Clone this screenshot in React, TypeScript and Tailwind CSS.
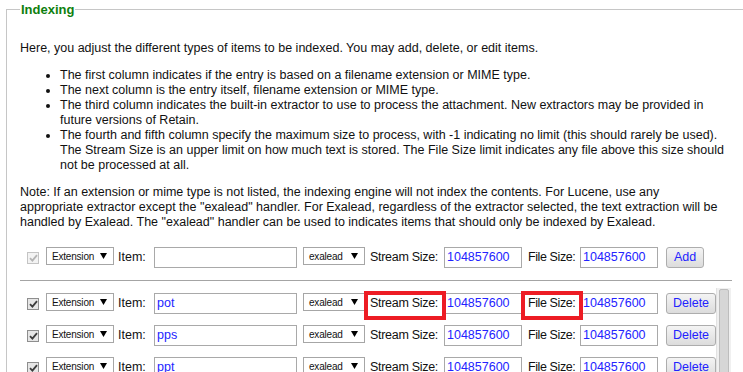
import { FC } from 'react';

const font = { fontFamily: '"Liberation Sans", Arial, sans-serif' };

const Check: FC<{ disabled?: boolean }> = ({ disabled }) => (
  <div
    className={`mt-[5px] ml-[7px] flex h-[12px] w-[12px] shrink-0 items-center justify-center border ${
      disabled ? 'border-[#c4c4c4] bg-[#f3f3f3]' : 'border-[#8e8e8e] bg-[#e6e6e6]'
    }`}
  >
    <svg width="9" height="8" viewBox="0 0 9 8">
      <path
        d="M1 4.2 L3.4 6.6 L8 1.2"
        fill="none"
        stroke={disabled ? '#b4b4b4' : '#3c3c3c'}
        strokeWidth="1.8"
      />
    </svg>
  </div>
);

const Select: FC<{ value: string; className: string }> = ({ value, className }) => (
  <div
    className={`flex h-[18px] shrink-0 items-center justify-between border border-[#a6a6a6] bg-white pr-[6px] pl-[5px] text-[10px] tracking-[-0.2px] text-[#111] ${className}`}
  >
    <span>{value}</span>
    <svg width="7" height="6" viewBox="0 0 7 6">
      <path d="M0 0 H7 L3.5 6 Z" fill="#000" />
    </svg>
  </div>
);

const Field: FC<{ value: string; className: string }> = ({ value, className }) => (
  <div
    className={`flex h-[21px] shrink-0 items-center border border-[#a9a9a9] bg-white pl-[2px] text-[12.5px] text-[#2323ff] ${className}`}
  >
    {value}
  </div>
);

const Label: FC<{ text: string; className: string; marked?: boolean; box?: string }> = ({
  text,
  className,
  marked,
  box,
}) => (
  <div className={`relative flex h-[21px] shrink-0 items-center whitespace-nowrap ${className}`}>
    {text}
    {marked && <div className={`absolute z-10 border-[4px] border-[#ed1c24] ${box}`} />}
  </div>
);

const Row: FC<{ item: string; template?: boolean; marked?: boolean }> = ({ item, template, marked }) => (
  <div className="flex items-start text-[12.5px] text-[#111]">
    <Check disabled={template} />
    <Select value="Extension" className="ml-[7px] w-[68px]" />
    <Label text="Item:" className="ml-[4px] w-[29px]" />
    <Field value={item} className="ml-[7px] w-[143px]" />
    <Select value="exalead" className="ml-[6px] w-[62px]" />
    <Label
      text="Stream Size:"
      className="ml-[5px] w-[68px] tracking-[-0.3px]"
      marked={marked}
      box="top-[-2px] bottom-[-6px] left-[-6px] right-[-8px]"
    />
    <Field value="104857600" className="ml-[6px] w-[78px]" />
    <Label
      text="File Size:"
      className="ml-[6px] w-[46px] tracking-[-0.4px]"
      marked={marked}
      box="top-[-2px] bottom-[-6px] left-[-7px] right-[-9px]"
    />
    <Field value="104857600" className="ml-[6px] w-[78px]" />
    <button
      className={`ml-[8px] h-[21px] shrink-0 rounded-[3px] border border-[#adadad] bg-gradient-to-b from-[#f4f4f4] to-[#dcdcdc] text-[12.5px] text-[#2323ff] ${
        template ? 'w-[38px]' : 'w-[50px]'
      }`}
    >
      {template ? 'Add' : 'Delete'}
    </button>
  </div>
);

const items = ['pot', 'pps', 'ppt', 'pptx', 'ppsx', 'potx'];

export default function App() {
  return (
    <div className="h-[372px] w-[743px] overflow-hidden bg-white text-[12.5px] leading-[15px] text-[#111]" style={font}>
      <fieldset className="ml-[6px] border border-r-0 border-b-0 border-[#c6c6c6] pl-[13px]">
        <legend className="px-[1px] text-[13px] leading-[19px] font-bold text-[#0e7f0e]">Indexing</legend>
        <p className="mt-[22px]">
          Here, you adjust the different types of items to be indexed. You may add, delete, or edit items.
        </p>
        <ul className="mt-[12px] w-[723px] list-disc pl-[40px]">
          <li>The first column indicates if the entry is based on a filename extension or MIME type.</li>
          <li>The next column is the entry itself, filename extension or MIME type.</li>
          <li>
            The third column indicates the built-in extractor to use to process the attachment. New extractors may be
            provided in
            <br />
            future versions of Retain.
          </li>
          <li>
            The fourth and fifth column specify the maximum size to process, with -1 indicating no limit (this should
            rarely be used).
            <br />
            The Stream Size is an upper limit on how much text is stored. The File Size limit indicates any file above
            this size should
            <br />
            not be processed at all.
          </li>
        </ul>
        <p className="mt-[12px] w-[723px]">
          Note: If an extension or mime type is not listed, the indexing engine will not index the contents. For Lucene,
          use any
          <br />
          appropriate extractor except the "exalead" handler. For Exalead, regardless of the extractor selected, the
          text extraction will be
          <br />
          handled by Exalead. The "exalead" handler can be used to indicates items that should only be indexed by
          Exalead.
        </p>
        <div className="mt-[17px]">
          <Row item="" template />
        </div>
        <div className="mt-[12px] h-px w-[712px] bg-[#a4a4a4]" />
        <div className="mt-[7px] flex h-[120px] w-[711px]">
          <div className="flex flex-1 flex-col gap-[11px] overflow-hidden pt-[5px]">
            {items.map((it, i) => (
              <Row key={it} item={it} marked={i === 0} />
            ))}
          </div>
          <div className="w-[15px] shrink-0 border-l border-[#e2e2e2] bg-[#f0f0f0] pt-[1px]">
            <div className="mx-[2px] h-full rounded-[2px] border border-[#bdbdbd] bg-[#d6d6d6]" />
          </div>
        </div>
      </fieldset>
    </div>
  );
}
